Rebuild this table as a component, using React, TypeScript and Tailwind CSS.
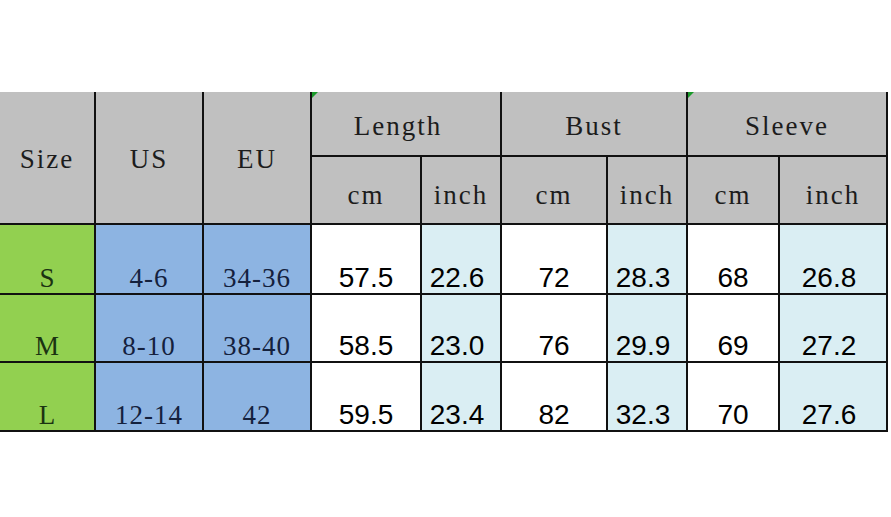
import React from 'react'

const serif = "font-['Liberation_Serif','DejaVu_Serif',serif]"
const sans = "font-['Liberation_Sans',Arial,sans-serif]"

type Row = { size: string; us: string; eu: string; vals: string[] }

const rows: Row[] = [
  { size: 'S', us: '4-6', eu: '34-36', vals: ['57.5', '22.6', '72', '28.3', '68', '26.8'] },
  { size: 'M', us: '8-10', eu: '38-40', vals: ['58.5', '23.0', '76', '29.9', '69', '27.2'] },
  { size: 'L', us: '12-14', eu: '42', vals: ['59.5', '23.4', '82', '32.3', '70', '27.6'] },
]

function Marker() {
  // little green comment triangle in the top-left corner
  return (
    <span className="absolute left-0 top-0 w-0 h-0 border-t-[6px] border-t-[#1a9a2a] border-r-[6px] border-r-transparent" />
  )
}

export default function App() {
  const head = `flex items-center justify-center bg-[#c0c0c0] border-r-2 border-b-2 border-[#111] text-[27px] leading-none tracking-[2px] text-[#1c1c1c] ${serif}`
  const cell = 'flex items-end justify-center border-r-2 border-b-2 border-[#111] leading-none'

  return (
    <div className="w-[891px] h-[517px] bg-white pt-[92px] overflow-hidden">
      <div className="grid grid-cols-[96px_108px_108px_110px_80px_106px_80px_92px_108px] grid-rows-[65px_68px_70px_68px_69px] w-[890px]">
        <div className={`${head} row-span-2 pt-[4px]`}>Size</div>
        <div className={`${head} row-span-2 pt-[4px]`}>US</div>
        <div className={`${head} row-span-2 pt-[4px]`}>EU</div>
        <div className={`${head} col-span-2 relative pr-[16px] pt-[6px]`}>
          <Marker />
          Length
        </div>
        <div className={`${head} col-span-2 pt-[6px]`}>Bust</div>
        <div className={`${head} col-span-2 relative pt-[6px]`}>
          <Marker />
          Sleeve
        </div>
        {['cm', 'inch', 'cm', 'inch', 'cm', 'inch'].map((u, i) => (
          <div key={i} className={`${head} pt-[10px]`}>{u}</div>
        ))}

        {rows.map((r) => (
          <React.Fragment key={r.size}>
            <div className={`${cell} bg-[#92d050] text-[27px] text-[#1b3312] pb-[1px] ${serif}`}>{r.size}</div>
            <div className={`${cell} bg-[#8db4e2] text-[27px] tracking-[1px] text-[#14213d] pb-[1px] ${serif}`}>{r.us}</div>
            <div className={`${cell} bg-[#8db4e2] text-[27px] tracking-[1px] text-[#14213d] pb-[1px] ${serif}`}>{r.eu}</div>
            {r.vals.map((v, i) => (
              <div
                key={i}
                className={`${cell} ${i % 2 === 1 ? 'bg-[#daeef3] pr-[8px]' : 'bg-white'} text-[28px] text-black pb-[1px] ${sans}`}
              >
                {v}
              </div>
            ))}
          </React.Fragment>
        ))}
      </div>
    </div>
  )
}
